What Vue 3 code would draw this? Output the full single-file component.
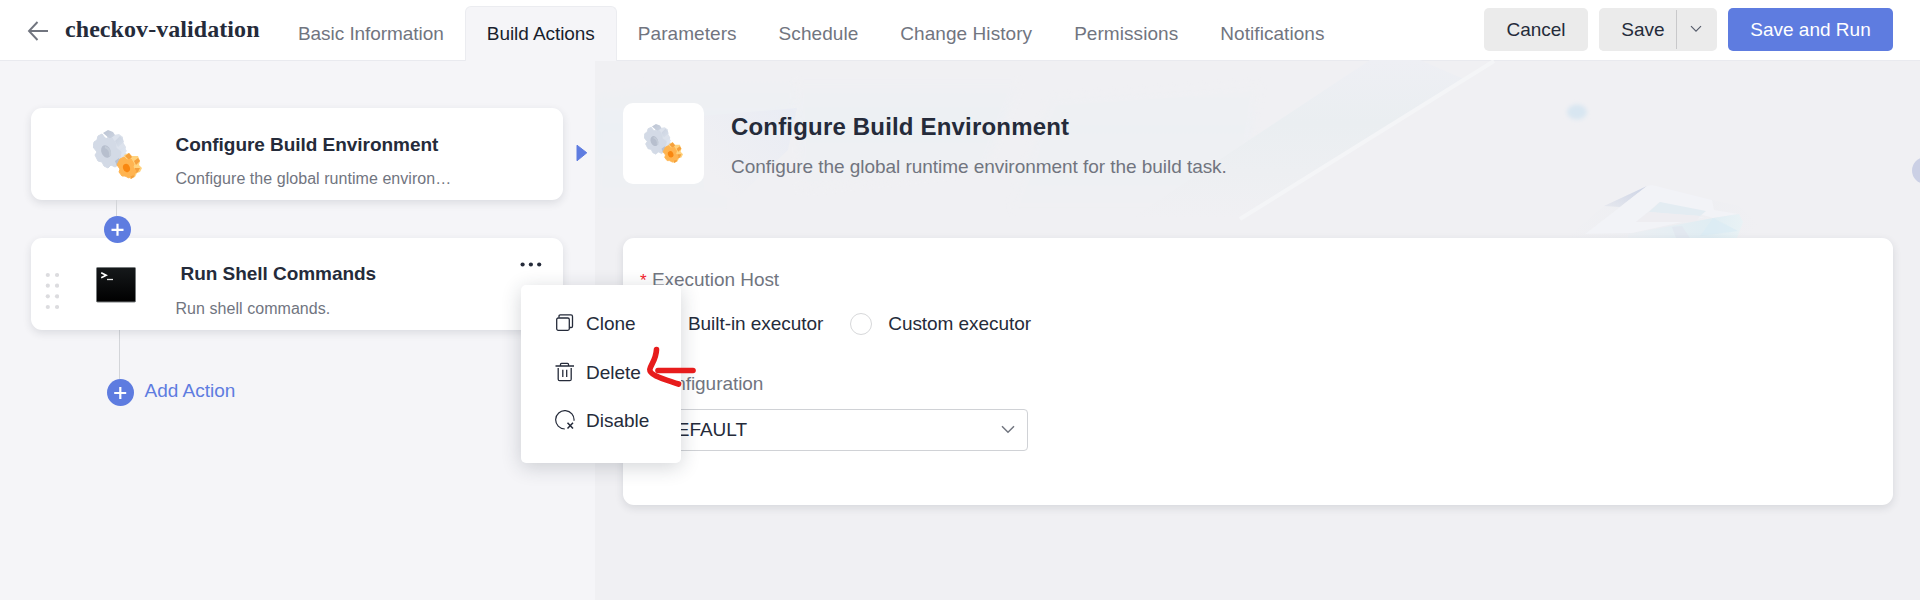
<script setup>
const tabs = [
  'Basic Information',
  'Build Actions',
  'Parameters',
  'Schedule',
  'Change History',
  'Permissions',
  'Notifications',
]
const activeTab = 'Build Actions'
</script>

<template>
  <div class="page">
    <svg class="defs" width="0" height="0" aria-hidden="true">
      <defs>
        <linearGradient id="gearSide" x1="0" y1="0" x2="1" y2="1">
          <stop offset="0" stop-color="#bcc4d3" />
          <stop offset="1" stop-color="#e3eaf4" />
        </linearGradient>
        <symbol id="gears" viewBox="0 0 49 49">
          <path d="M14 1l5 1 2 3 5-1 4 3 0 5 3 5-1 5 3 3-6 9-15 2z" fill="#dce2ec" />
          <path d="M10 3l5-3 5 2 2 3-5 4zM22 11l5-5 3 3 1 3-6 5zM26 20l5-3 3 4-5 5z" fill="url(#gearSide)" />
          <path d="M5 6l4-2 3 4 4 1 3-1 4 6 0 4 5 4-1 6-3 2 1 5-3 2-4-2-3 3-4-2-2-4-4-1-3-6 2-3-4-5 1-5 3-2z" fill="#d3dae6" stroke="#d3dae6" stroke-linejoin="round" />
          <ellipse cx="13" cy="21.5" rx="4.6" ry="6.5" transform="rotate(-22 13 21.500)" fill="#b7bfce" />
          <path d="M12 17q6 2 5 9" fill="none" stroke="#c4ccd8" stroke-width="2" />
          <path d="M22 31l4-3 2 5-4 3z" fill="#b8c0cf" />
          <path d="M31 25l5-2 3 3 6 0 2 5-1 4 3 3-2 4-3 1-2 4-5 2z" fill="#ffd27e" />
          <path d="M32 26l4-3 3 4-3 3zM41 31l4-3 2 3-4 4zM42 38l5 0-2 4-4 2zM37 46l5-2-1 3-3 2z" fill="#f5a03c" />
          <path d="M27 29l4-2 3 3 4-1 3 5-1 3 3 4-2 4-3 0-2 3-4-2-3 0-3-4 1-3-3-4z" fill="#ffb450" stroke="#ffb450" stroke-linejoin="round" />
          <ellipse cx="33.500" cy="38" rx="3.400" ry="4.200" transform="rotate(-22 33.500 38)" fill="#f98710" />
        </symbol>
      </defs>
    </svg>

    <header class="header">
      <svg class="back" width="22" height="20" viewBox="0 0 22 20">
        <path d="M21 10H2M10.500 1L2 10l8.500 9" fill="none" stroke="#71757f" stroke-width="1.900" />
      </svg>
      <h1 class="title">checkov-validation</h1>
      <nav class="tabs">
        <a v-for="t in tabs" :key="t" class="tab" :class="{ active: t === activeTab }">{{ t }}</a>
      </nav>
      <div class="actions">
        <button class="btn cancel">Cancel</button>
        <div class="split">
          <button class="btn save">Save</button>
          <span class="more">
            <svg width="12" height="8" viewBox="0 0 12 8"><path d="M1 1.200l5 5 5-5" fill="none" stroke="#575d6c" stroke-width="1.200" /></svg>
          </span>
        </div>
        <button class="btn primary">Save and Run</button>
      </div>
    </header>

    <main class="body">
      <section class="left">
        <article class="card">
          <svg class="gear" width="49" height="49"><use href="#gears" /></svg>
          <div class="info">
            <h2>Configure Build Environment</h2>
            <p>Configure the global runtime environ…</p>
          </div>
          <svg class="pointer" width="12" height="18" viewBox="0 0 12 18"><path d="M1 1.200L10.800 8.800 1 16.800z" fill="#5e7ce0" stroke="#5e7ce0" stroke-linejoin="round" /></svg>
        </article>
        <div class="joint">
          <span class="line"></span>
          <svg class="plus" width="27" height="27" viewBox="0 0 27 27">
            <circle cx="13.500" cy="13.500" r="13.500" fill="#5e7ce0" />
            <path d="M7.500 13.800h12M13.500 7.800v12" stroke="#fff" stroke-width="2.200" />
          </svg>
        </div>
        <article class="card second">
          <svg class="drag" width="14" height="38" viewBox="0 0 14 38" fill="#dcdcdf">
            <g v-for="r in 4" :key="r">
              <circle cx="2.800" :cy="3 + (r - 1) * 10.67" r="2.100" />
              <circle cx="12" :cy="3 + (r - 1) * 10.67" r="2.100" />
            </g>
          </svg>
          <svg class="term" width="40" height="36" viewBox="0 0 40 36">
            <defs>
              <linearGradient id="termFill" x1="0" y1="0" x2="0" y2="1">
                <stop offset="0" stop-color="#16191b" />
                <stop offset="1" stop-color="#000" />
              </linearGradient>
            </defs>
            <rect x=".5" y=".5" width="39" height="34.500" rx="1" fill="url(#termFill)" stroke="#777b7c" />
            <path d="M5.200 5.800l5 2.400-5 2.600" fill="none" stroke="#fff" stroke-width="1.600" />
            <path d="M11 12.500h6" stroke="#e4e4e4" stroke-width="1.300" />
          </svg>
          <div class="info">
            <h2 class="indent">Run Shell Commands</h2>
            <p>Run shell commands.</p>
          </div>
          <svg class="dots" width="22" height="5" viewBox="0 0 22 5" fill="#252b3a">
            <circle cx="2.600" cy="2.500" r="2.100" /><circle cx="10.900" cy="2.500" r="2.100" /><circle cx="19.200" cy="2.500" r="2.100" />
          </svg>
        </article>
        <div class="tail">
          <span class="line"></span>
          <div class="add">
            <svg class="plus" width="27" height="27" viewBox="0 0 27 27">
              <circle cx="13.500" cy="13.500" r="13.500" fill="#5e7ce0" />
              <path d="M7.200 14h12M13.300 8v12" stroke="#fff" stroke-width="2.200" />
            </svg>
            <span>Add Action</span>
          </div>
        </div>
      </section>

      <section class="right">
        <svg class="decor" width="1325" height="178" viewBox="595 60 1325 178">
          <defs>
            <linearGradient id="band" x1="0" y1="0" x2="0" y2="1">
              <stop offset="0" stop-color="#eeeff4" />
              <stop offset=".4" stop-color="#eaeef1" />
              <stop offset="1" stop-color="#f0f0f3" />
            </linearGradient>
            <linearGradient id="haze" x1="0" y1="0" x2="0" y2="1">
              <stop offset="0" stop-color="#f0f0f3" />
              <stop offset=".35" stop-color="#ecf0f4" />
              <stop offset="1" stop-color="#f0f0f3" />
            </linearGradient>
            <linearGradient id="facet" x1="0" y1="1" x2="1" y2="0">
              <stop offset=".2" stop-color="#f0f0f3" />
              <stop offset="1" stop-color="#e9ecf4" />
            </linearGradient>
            <linearGradient id="ice" x1="0" y1="0" x2="1" y2="0">
              <stop offset="0" stop-color="#eceff3" />
              <stop offset=".7" stop-color="#e0edf3" />
              <stop offset="1" stop-color="#e9f2f5" />
            </linearGradient>
            <linearGradient id="dusk" x1="1" y1="0" x2="0" y2="1">
              <stop offset="0" stop-color="#ccd3e5" />
              <stop offset="1" stop-color="#e6e8ee" />
            </linearGradient>
            <linearGradient id="fadeIn" x1="0" y1="0" x2="1" y2="0">
              <stop offset="0" stop-color="#f0f0f3" />
              <stop offset=".5" stop-color="#edeef2" />
              <stop offset="1" stop-color="#f0f0f3" />
            </linearGradient>
            <filter id="soft" x="-50%" y="-50%" width="200%" height="200%"><feGaussianBlur stdDeviation="2" /></filter>
            <filter id="faint" x="-10%" y="-10%" width="120%" height="120%"><feGaussianBlur stdDeviation="3" /></filter>
          </defs>
          <path d="M595 96L680 78H796V108L730 132V215H595z" fill="url(#haze)" filter="url(#faint)" />
          <path d="M700 116L797 108L788 150L735 200L704 190z" fill="url(#facet)" />
          <path d="M796 82H1020L985 170L800 190z" fill="url(#haze)" opacity=".7" filter="url(#faint)" />
          <path d="M1050 98L1260 84L1240 210H1010z" fill="url(#haze)" opacity=".5" filter="url(#faint)" />
          <path d="M1370 60H1420L1466 80L1240 219H1130z" fill="url(#band)" />
          <path d="M1494 61L1240 219" stroke="#f4f5f7" stroke-width="4" />
          <ellipse cx="1577" cy="112" rx="10" ry="7.500" fill="#d8e6f1" filter="url(#soft)" />
          <circle cx="1925.500" cy="170.500" r="13.500" fill="#cbd0e5" />
          <path d="M1566 238L1604 206L1647 186L1740 206L1760 225L1740 238z" fill="url(#fadeIn)" />
          <path d="M1604 206L1647 186L1620 207z" fill="url(#dusk)" />
          <path d="M1647 186Q1652 184 1660 187L1712 200L1714 210L1738 214L1713 218L1660 202L1636 222L1705 217L1632 233L1585 234L1620 207z" fill="#f2f3f7" />
          <path d="M1660 202L1706 211L1700 216L1649 212z" fill="#e3ecf2" />
          <path d="M1649 212L1700 216L1696 222L1636 222z" fill="#eeedf1" />
          <path d="M1628 234L1713 218L1739 214L1743 222L1737 238H1628z" fill="url(#ice)" />
          <path d="M1713 218L1738 231L1700 236z" fill="#daebf4" opacity=".7" />
          <path d="M1672 227L1682 226L1690 238H1676z" fill="#e2e8f0" />
        </svg>
        <div class="intro">
          <div class="tile"><svg width="39" height="39"><use href="#gears" /></svg></div>
          <div class="headline">
            <h2>Configure Build Environment</h2>
            <p>Configure the global runtime environment for the build task.</p>
          </div>
        </div>
        <div class="form">
          <label class="label"><i>*</i>Execution Host</label>
          <div class="radios">
            <span class="radio checked"></span><span class="opt">Built-in executor</span>
            <span class="radio"></span><span class="opt">Custom executor</span>
          </div>
          <label class="label config">Configuration</label>
          <div class="select">
            <span>DEFAULT</span>
            <svg width="14" height="9" viewBox="0 0 14 9"><path d="M1 1.200l6 6 6-6" fill="none" stroke="#71757f" stroke-width="1.500" /></svg>
          </div>
        </div>
      </section>
    </main>

    <div class="menu">
      <div class="item">
        <svg width="20" height="20" viewBox="0 0 20 20" fill="none" stroke="#252b3a" stroke-width="1.300">
          <rect x="1.700" y="5" width="12.600" height="12.300" rx="1.500" />
          <path d="M4 4.500V3.200q0-1.300 1.300-1.300H16q1.500 0 1.500 1.500v9.800q0 1.300-1.300 1.300H14.500" />
        </svg>
        <span>Clone</span>
      </div>
      <div class="item">
        <svg width="20" height="20" viewBox="0 0 20 20" fill="none" stroke="#252b3a" stroke-width="1.300">
          <path d="M.5 4h18.500M5.500 3.500V2.300q0-1 1-1h6q1 0 1 1V3.500M3.200 6v11.200q0 1.500 1.500 1.500h10q1.500 0 1.500-1.500V6M7.800 7.800v7.200M11.700 7.800v7.200" />
        </svg>
        <span>Delete</span>
      </div>
      <div class="item">
        <svg width="20" height="20" viewBox="0 0 20 20" fill="none" stroke="#252b3a" stroke-width="1.200">
          <path d="M9.800 19A9.200 9.200 0 1 1 19 10.800" />
          <path d="M12.500 12.800l5.500 5.800M18 12.800l-5.500 5.800" stroke-width="1.500" />
        </svg>
        <span>Disable</span>
      </div>
    </div>

    <svg class="mark" width="56" height="48" viewBox="640 340 56 48" fill="none" stroke="#e71c1c" stroke-width="5.600" stroke-linecap="round" stroke-linejoin="round">
      <path d="M656.500 349.500C656 360 651 364 649.800 369.500C649.500 375.500 664 379 678.500 384" />
      <path d="M658 370.500H693" />
    </svg>
  </div>
</template>

<style>
body {
  margin: 0;
}
</style>

<style scoped>
.page {
  position: relative;
  width: 1920px;
  height: 600px;
  overflow: hidden;
  background: #f5f5f8;
  color: #252b3a;
  font-family: 'Liberation Sans', Arial, sans-serif;
  font-size: 19px;
  line-height: 24px;
}
.defs {
  position: absolute;
}
h1,
h2,
p {
  margin: 0;
}
svg {
  display: block;
  flex: none;
}
.header {
  display: flex;
  height: 61px;
  box-sizing: border-box;
  background: #fff;
  border-bottom: 1px solid #e9eaef;
}
.back {
  margin: 21px 0 0 27px;
}
.title {
  width: 212px;
  margin: 15px 0 0 16px;
  font: bold 24px/28px 'Liberation Serif', 'Times New Roman', serif;
  letter-spacing: 0.07px;
  white-space: nowrap;
}
.tabs {
  display: flex;
  height: 61px;
  padding-top: 6px;
  box-sizing: border-box;
}
.tab {
  box-sizing: border-box;
  padding: 16px 21px 0;
  color: #71757f;
  letter-spacing: -0.06px;
  white-space: nowrap;
}
.tab:nth-child(n + 3) {
  letter-spacing: 0.06px;
}
.tab.active {
  padding: 15px 21px 0;
  background: #f5f5f8;
  border: 1px solid #ebecf0;
  border-bottom: 0;
  border-radius: 6px 6px 0 0;
  color: #191f2e;
}
.actions {
  display: flex;
  gap: 11px;
  height: 43px;
  margin: 8px 27px 0 auto;
}
.btn {
  padding: 0;
  border: 0;
  border-radius: 5px;
  background: #ebebeb;
  color: #252b3a;
  font: inherit;
  line-height: 41px;
  padding-bottom: 1px;
}
.cancel {
  width: 104px;
}
.split {
  display: flex;
  align-items: center;
  width: 118px;
  border-radius: 5px;
  background: #ebebeb;
}
.save {
  width: 77px;
  padding-left: 11px;
}
.more {
  display: flex;
  align-items: center;
  justify-content: center;
  width: 40px;
  height: 39px;
  padding: 0 2px 1px 0;
  box-sizing: border-box;
  border-left: 1px solid #c8c8ca;
}
.primary {
  width: 165px;
  background: #5e7ce0;
  color: #fff;
}
.body {
  display: flex;
  height: 539px;
}
.left {
  width: 595px;
  box-sizing: border-box;
  padding: 47px 0 0 31px;
}
.card {
  position: relative;
  display: flex;
  width: 532px;
  height: 92px;
  border-radius: 11px;
  background: #fff;
  box-shadow: 0 3px 9px rgba(37, 43, 58, 0.12);
}
.gear {
  margin: 22px 33.5px 0 62px;
}
.info h2 {
  margin-top: 25px;
  font-size: 19px;
  line-height: 24px;
  letter-spacing: -0.04px;
}
.info p {
  margin-top: 12px;
  color: #71757f;
  font-size: 16px;
  line-height: 20px;
  letter-spacing: 0.05px;
  white-space: nowrap;
}
.second .info h2 {
  margin-top: 24px;
}
.second .info p {
  margin-top: 13px;
}
.info .indent {
  padding-left: 5px;
}
.pointer {
  position: absolute;
  left: 544.5px;
  top: 36px;
}
.joint {
  position: relative;
  z-index: 1;
  height: 38px;
  padding-left: 73px;
}
.joint .line {
  display: block;
  width: 1px;
  height: 16px;
  margin-left: 12px;
  background: #d3d5d9;
}
.drag {
  margin: 34px 0 0 14px;
}
.term {
  margin: 29px 39.5px 0 37px;
}
.dots {
  margin: 24px 21px 0 auto;
}
.tail {
  padding-left: 76px;
}
.tail .line {
  display: block;
  width: 1px;
  height: 49px;
  margin-left: 12px;
  background: #d3d5d9;
}
.add {
  display: flex;
  align-items: center;
  gap: 10.5px;
  color: #5e7ce0;
}
.add span {
  margin-top: -3px;
}
.right {
  position: relative;
  flex: 1;
  box-sizing: border-box;
  padding: 42px 27px 0 28px;
  background: #f0f0f3;
}
.decor {
  position: absolute;
  left: 0;
  top: -1px;
}
.intro {
  position: relative;
  display: flex;
  gap: 27px;
  height: 135px;
}
.tile {
  display: flex;
  align-items: center;
  justify-content: center;
  width: 81px;
  height: 81px;
  border-radius: 10px;
  background: #fff;
}
.headline h2 {
  margin-top: 9px;
  font-size: 24px;
  line-height: 30px;
  letter-spacing: 0.18px;
}
.headline p {
  margin-top: 13px;
  color: #71757f;
  letter-spacing: -0.045px;
}
.form {
  position: relative;
  height: 267px;
  box-sizing: border-box;
  padding: 30px 0 0 17px;
  border-radius: 11px;
  background: #fff;
  box-shadow: 0 3px 9px rgba(37, 43, 58, 0.12);
}
.label {
  display: block;
  color: #71757f;
  letter-spacing: -0.05px;
}
.label i {
  display: inline-block;
  width: 12px;
  color: #f5222d;
  font-style: normal;
  font-size: 17px;
}
.radios {
  display: flex;
  align-items: center;
  margin: 19px 0 0 12px;
}
.radio {
  width: 22px;
  height: 22px;
  box-sizing: border-box;
  border: 1px solid #d7d8da;
  border-radius: 50%;
}
.radio.checked {
  width: 20px;
  height: 20px;
  border: 6px solid #5e7ce0;
}
.opt {
  margin: 0 27px 0 16px;
  letter-spacing: -0.06px;
}
.config {
  margin: 36px 0 0 11px;
}
.select {
  display: flex;
  align-items: center;
  justify-content: space-between;
  width: 376px;
  height: 42px;
  box-sizing: border-box;
  margin: 13px 0 0 12px;
  padding: 0 12px 1px 10px;
  border: 1px solid #d0d2d6;
  border-radius: 4px;
}
.menu {
  position: absolute;
  left: 521px;
  top: 285px;
  width: 160px;
  height: 178px;
  box-sizing: border-box;
  padding: 27px 0 0 34px;
  border-radius: 5px;
  background: #fff;
  box-shadow: 0 4px 20px rgba(37, 43, 58, 0.2);
}
.item {
  display: flex;
  align-items: center;
  gap: 11px;
  height: 24px;
  margin-bottom: 24.5px;
}
.item svg {
  margin-top: -2px;
}
.mark {
  position: absolute;
  left: 640px;
  top: 340px;
}
</style>
